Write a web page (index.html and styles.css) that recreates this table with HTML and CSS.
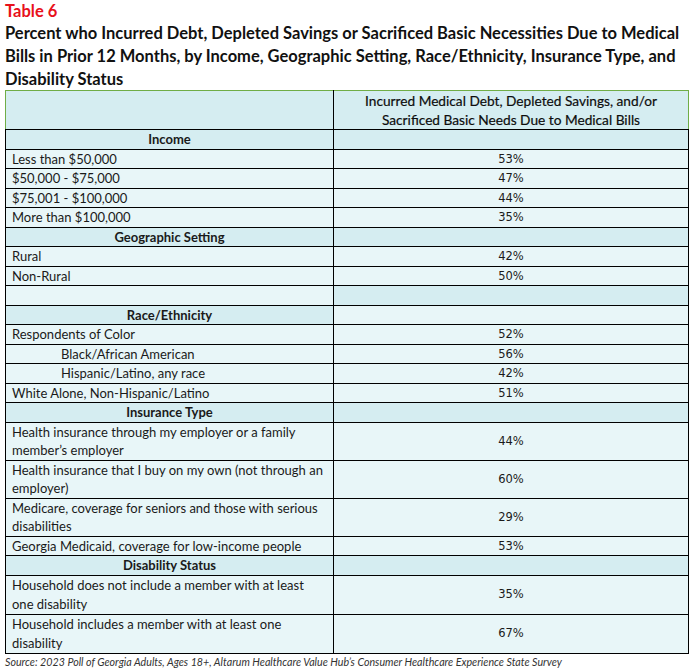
FILE: index.html
```html
<!DOCTYPE html>
<html lang="en">
<head>
<meta charset="utf-8">
<title>Table 6</title>
<link rel="stylesheet" href="styles.css">
</head>
<body>
<div class="page">
  <div class="label">Table 6</div>
  <h1 class="title">Percent who Incurred Debt, Depleted Savings or Sacrificed Basic Necessities Due to Medical Bills in Prior 12 Months, by Income, Geographic Setting, Race/Ethnicity, Insurance Type, and Disability Status</h1>
  <table class="data">
    <colgroup><col class="c1"><col class="c2"></colgroup>
    <tr class="head">
      <td class="dark"></td>
      <td class="dark colhead">Incurred Medical Debt, Depleted Savings, and/or<br>Sacrificed Basic Needs Due to Medical Bills</td>
    </tr>
    <tr class="sec"><td class="dark">Income</td><td class="dark"></td></tr>
    <tr><td>Less than $50,000</td><td class="pct">53%</td></tr>
    <tr><td>$50,000 - $75,000</td><td class="pct">47%</td></tr>
    <tr><td>$75,001 - $100,000</td><td class="pct">44%</td></tr>
    <tr><td>More than $100,000</td><td class="pct">35%</td></tr>
    <tr class="sec"><td class="dark">Geographic Setting</td><td class="dark"></td></tr>
    <tr><td>Rural</td><td class="pct">42%</td></tr>
    <tr><td>Non-Rural</td><td class="pct">50%</td></tr>
    <tr class="blank"><td></td><td class="dark"></td></tr>
    <tr class="sec"><td class="dark">Race/Ethnicity</td><td></td></tr>
    <tr><td>Respondents of Color</td><td class="pct">52%</td></tr>
    <tr><td class="indent">Black/African American</td><td class="pct">56%</td></tr>
    <tr><td class="indent">Hispanic/Latino, any race</td><td class="pct">42%</td></tr>
    <tr><td>White Alone, Non-Hispanic/Latino</td><td class="pct">51%</td></tr>
    <tr class="sec"><td class="dark">Insurance Type</td><td class="dark"></td></tr>
    <tr><td>Health insurance through my employer or a family<br>member’s employer</td><td class="pct">44%</td></tr>
    <tr><td>Health insurance that I buy on my own (not through an<br>employer)</td><td class="pct">60%</td></tr>
    <tr><td>Medicare, coverage for seniors and those with serious<br>disabilities</td><td class="pct">29%</td></tr>
    <tr><td>Georgia Medicaid, coverage for low-income people</td><td class="pct">53%</td></tr>
    <tr class="sec"><td class="dark">Disability Status</td><td class="dark"></td></tr>
    <tr class="tall"><td>Household does not include a member with at least<br>one disability</td><td class="pct">35%</td></tr>
    <tr class="tall"><td>Household includes a member with at least one<br>disability</td><td class="pct">67%</td></tr>
  </table>
  <p class="source">Source: 2023 Poll of Georgia Adults, Ages 18+, Altarum Healthcare Value Hub’s Consumer Healthcare Experience State Survey</p>
</div>
</body>
</html>
```

FILE: styles.css
```css
html, body {
  margin: 0;
  padding: 0;
  background: #ffffff;
}

.page {
  padding: 1px 0 0 5px;
  font-family: Lato, "Open Sans", sans-serif;
  color: #1a1a1a;
}

.label {
  font-size: 16.5px;
  font-weight: 700;
  line-height: 21px;
  color: #e8111b;
}

.title {
  margin: 0;
  width: 686px;
  font-size: 16.5px;
  font-weight: 700;
  line-height: 23px;
  color: #111111;
}

.data {
  border-collapse: collapse;
  table-layout: fixed;
  width: 683px;
  margin-top: -1px;
  font-size: 13px;
  border: 1px solid #000;
}

.c1 { width: 328px; }
.c2 { width: 355px; }

.data td {
  border: 1px solid #000;
  padding: 0 0 0 6px;
  line-height: 18.5px;
  background: #e8f6f8;
  vertical-align: middle;
  color: #1a1a1a;
}

.data td.dark {
  background: #d5edf1;
}

.data td.indent {
  padding-left: 55px;
}

.data td.pct {
  padding: 0;
  text-align: center;
  font-family: "DejaVu Sans", sans-serif;
  font-size: 11.5px;
}

.blank td {
  height: 18.5px;
}

.tall td {
  height: 38px;
}

.head td {
  border-top-color: #70ad47;
  height: 37px;
}

.head td:first-child {
  border-left-color: #70ad47;
}

.head td:last-child {
  border-right-color: #70ad47;
}

.head td.colhead {
  padding: 0;
  text-align: center;
  font-size: 13.7px;
  line-height: 19px;
  color: #0d0d0d;
  -webkit-text-stroke: 0.2px #0d0d0d;
}

.sec td {
  text-align: center;
  font-weight: 700;
  padding: 0;
}

.source {
  margin: 0;
  padding-top: 1px;
  font-size: 10.7px;
  font-style: italic;
  line-height: 14px;
  color: #333333;
}
```
